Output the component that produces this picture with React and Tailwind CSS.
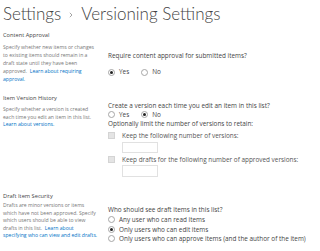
const Radio = ({ checked }) => (
  <span className="inline-flex h-[7px] w-[7px] shrink-0 items-center justify-center rounded-full border border-[#a6a6a6] bg-white">
    {checked && <span className="h-[3px] w-[3px] rounded-full bg-[#222]" />}
  </span>
);

const RadioRow = ({ checked, label, className = 'leading-[10px]' }) => (
  <div className={`flex items-center gap-[4px] whitespace-nowrap ${className}`}>
    <Radio checked={checked} />
    <span>{label}</span>
  </div>
);

const Checkbox = () => (
  <span className="h-[7px] w-[7px] shrink-0 border border-[#d4d4d4] bg-[#e4e4e4]" />
);

const Link = ({ children }) => <span className="text-[#0072c6]">{children}</span>;

export default function App() {
  return (
    <div className="h-[251px] w-[320px] overflow-hidden bg-white px-[3px] font-['Segoe_UI','Open_Sans',sans-serif] text-[#444]">
      {/* page title */}
      <h1 className="flex items-center whitespace-nowrap pt-[2px] font-['Lato',sans-serif] text-[17px] font-light leading-[24px] text-[#444]">
        <span>Settings</span>
        <svg className="mx-[8px] mt-[2px]" width="4" height="6" viewBox="0 0 4 6">
          <polyline points="0.8,0.8 3,3 0.8,5.2" fill="none" stroke="#9a9a9a" strokeWidth="0.9" />
        </svg>
        <span>Versioning Settings</span>
      </h1>

      {/* Content Approval */}
      <section className="mt-[5px] flex">
        <div className="w-[105px] shrink-0">
          <div className="text-[5.7px] leading-[8px] text-[#444]">Content Approval</div>
          <p className="mt-[4px] whitespace-nowrap text-[5.1px] leading-[8px] text-[#777]">
            Specify whether new items or changes
            <br />
            to existing items should remain in a
            <br />
            draft state until they have been
            <br />
            approved.&nbsp; <Link>Learn about requiring</Link>
            <br />
            <Link>approval.</Link>
          </p>
        </div>
        <div className="pt-[20px] text-[6.4px]">
          <div className="leading-[10px]">Require content approval for submitted items?</div>
          <div className="mt-[6px] flex items-center gap-[12px]">
            <RadioRow checked label="Yes" />
            <RadioRow label="No" />
          </div>
        </div>
      </section>

      {/* Item Version History */}
      <section className="mt-[11px] flex">
        <div className="w-[105px] shrink-0">
          <div className="text-[5.7px] leading-[8px] text-[#444]">Item Version History</div>
          <p className="mt-[4px] whitespace-nowrap text-[5.1px] leading-[7.6px] text-[#777]">
            Specify whether a version is created
            <br />
            each time you edit an item in this list.
            <br />
            <Link>Learn about versions.</Link>
          </p>
        </div>
        <div className="pt-[7px] text-[6.4px]">
          <div className="leading-[9px]">Create a version each time you edit an item in this list?</div>
          <div className="flex h-[9px] items-center gap-[12px]">
            <RadioRow label="Yes" />
            <RadioRow checked label="No" />
          </div>
          <div className="leading-[9px]">Optionally limit the number of versions to retain:</div>
          <div className="mt-[3px] flex items-center gap-[7px] leading-[9px] text-[#555]">
            <Checkbox />
            <span>Keep the following number of versions:</span>
          </div>
          <div className="ml-[14px] mt-[1.5px] h-[11px] w-[36px] border border-[#e1e1e1] bg-white" />
          <div className="mt-[2px] flex items-center gap-[7px] leading-[9px] text-[#555]">
            <Checkbox />
            <span>Keep drafts for the following number of approved versions:</span>
          </div>
          <div className="ml-[14px] mt-[1.5px] h-[12px] w-[36px] border border-[#e1e1e1] bg-white" />
        </div>
      </section>

      {/* Draft Item Security */}
      <section className="mt-[15px] flex">
        <div className="w-[105px] shrink-0">
          <div className="text-[5.7px] leading-[8px] text-[#444]">Draft Item Security</div>
          <p className="mt-[2px] whitespace-nowrap text-[5.1px] leading-[7.6px] text-[#777]">
            Drafts are minor versions or items
            <br />
            which have not been approved. Specify
            <br />
            which users should be able to view
            <br />
            drafts in this list.&nbsp; <Link>Learn about</Link>
            <br />
            <Link>specifying who can view and edit drafts.</Link>
          </p>
        </div>
        <div className="pt-[13px] text-[6.4px]">
          <div className="leading-[10px]">Who should see draft items in this list?</div>
          <RadioRow label="Any user who can read items" className="leading-[9.5px]" />
          <RadioRow checked label="Only users who can edit items" className="leading-[9.5px]" />
          <RadioRow
            label="Only users who can approve items (and the author of the item)"
            className="leading-[9.5px]"
          />
        </div>
      </section>
    </div>
  );
}
